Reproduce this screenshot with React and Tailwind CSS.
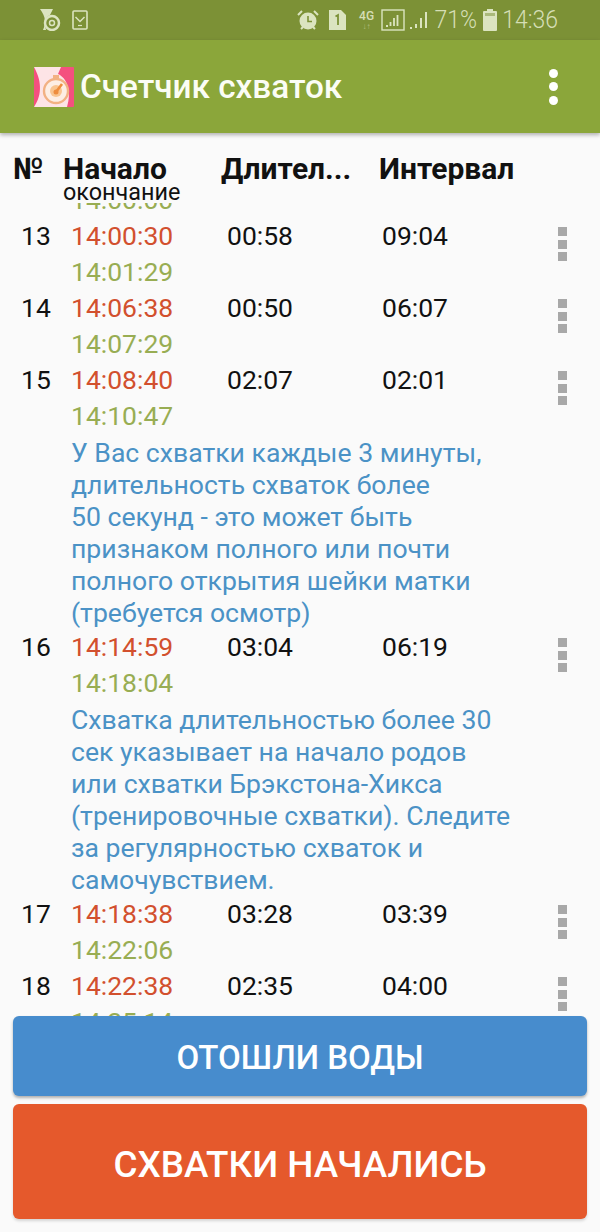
const rows = [
  { n: 13, start: '14:00:30', end: '14:01:29', dur: '00:58', gap: '09:04' },
  { n: 14, start: '14:06:38', end: '14:07:29', dur: '00:50', gap: '06:07' },
  {
    n: 15, start: '14:08:40', end: '14:10:47', dur: '02:07', gap: '02:01',
    note: ['У Вас схватки каждые 3 минуты,', 'длительность схваток более', '50 секунд - это может быть', 'признаком полного или почти', 'полного открытия шейки матки', '(требуется осмотр)'],
  },
  {
    n: 16, start: '14:14:59', end: '14:18:04', dur: '03:04', gap: '06:19',
    note: ['Схватка длительностью более 30', 'сек указывает на начало родов', 'или схватки Брэкстона-Хикса', '(тренировочные схватки). Следите', 'за регулярностью схваток и', 'самочувствием.'],
  },
  { n: 17, start: '14:18:38', end: '14:22:06', dur: '03:28', gap: '03:39' },
  { n: 18, start: '14:22:38', end: '14:25:14', dur: '02:35', gap: '04:00' },
];

function AppLogo() {
  return (
    <svg width="40" height="40" viewBox="0 0 40 40" className="shrink-0">
      <rect width="40" height="40" rx="1" fill="#f4507f" />
      <path d="M0 0H27L24 7C33 11 38 24 33 40H0C7 30 9 16 0 0Z" fill="#fde4e6" />
      <rect x="19" y="8" width="6" height="3" fill="#f2b183" />
      <circle cx="22" cy="24" r="12" fill="#fdeee4" stroke="#f2b183" strokeWidth="2.4" />
      <circle cx="22" cy="24" r="6" fill="#f9c590" />
      <path d="M22 25L28 17" stroke="#ee8d3e" strokeWidth="2.6" />
      <circle cx="22" cy="25" r="2.5" fill="#ee8d3e" />
    </svg>
  );
}

function StatusLeft() {
  return (
    <div className="flex items-center">
      <svg width="21" height="22" viewBox="0 0 21 22" className="ml-[40px]">
        <path d="M0 0H13L10 6C6 8 4 12 5 16L6 21H3C6 14 6 8 0 0Z" fill="#dbe4c0" />
        <circle cx="12" cy="14" r="7" fill="none" stroke="#dbe4c0" strokeWidth="2.5" />
        <circle cx="12" cy="14" r="2.5" fill="none" stroke="#dbe4c0" strokeWidth="1.5" />
      </svg>
      <svg width="16" height="20" viewBox="0 0 16 20" className="ml-[11px]" fill="none" stroke="#dbe4c0">
        <rect x="1" y="1" width="14" height="18" rx="1" strokeWidth="1.6" />
        <path d="M3.5 7L8 11.5L12.5 7" strokeWidth="1.5" />
        <path d="M6 15.5H10" strokeWidth="1.2" />
      </svg>
    </div>
  );
}

function StatusRight() {
  return (
    <div className="flex items-center text-[#d5deb5] text-[23px] font-light">
      <svg width="22" height="22" viewBox="0 0 22 22" fill="none">
        <circle cx="11" cy="12" r="8.5" fill="#dbe4c0" />
        <path d="M11 7V12.5H15" stroke="#7c9136" strokeWidth="1.6" />
        <path d="M1 6L5 2M21 6L17 2M4 20L6 18M18 20L16 18" stroke="#dbe4c0" strokeWidth="2" />
      </svg>
      <svg width="18" height="20" viewBox="0 0 18 20" className="ml-[9px]">
        <path d="M1 0H13L18 5V20H1Z" fill="#dbe4c0" />
        <path d="M7.5 6.5L10 5V15" stroke="#7c9136" strokeWidth="1.8" fill="none" />
      </svg>
      <div className="ml-[13px] flex w-[16px] flex-col items-center leading-none">
        <span className="text-[12px] font-medium leading-[13px]">4G</span>
        <span className="text-[8px] leading-[8px] opacity-60">↓↑</span>
      </div>
      <svg width="24" height="22" viewBox="0 0 24 22" className="ml-[6px]" fill="none">
        <rect x="1" y="1" width="22" height="20" stroke="#dbe4c0" strokeWidth="1.4" />
        <path d="M5 17H7M9.5 17V13M13 17V9M16.5 17V6" stroke="#dbe4c0" strokeWidth="1.8" />
      </svg>
      <svg width="22" height="22" viewBox="0 0 22 22" className="ml-[3px]" fill="none">
        <path d="M2 19H4M8 19V15M13 19V9M18 19V3" stroke="#dbe4c0" strokeWidth="2" />
      </svg>
      <span className="ml-[5px] inline-block scale-y-110">71%</span>
      <svg width="14" height="22" viewBox="0 0 14 22" className="ml-[6px]">
        <rect x="4" y="0" width="6" height="2" fill="#dbe4c0" />
        <rect x="0" y="2" width="14" height="20" rx="1" fill="#dbe4c0" />
        <rect x="2" y="4" width="10" height="3" fill="#a9b97a" />
      </svg>
      <span className="ml-[5px] mr-[42px] inline-block scale-y-110">14:36</span>
    </div>
  );
}

function Row({ row }) {
  return (
    <div>
      <div className="flex h-[72px] text-[26.5px] leading-[36px]">
        <div className="w-[71px] pl-[21px] text-[#111]">{row.n}</div>
        <div className="w-[156px]">
          <div className="text-[#d2502e]">{row.start}</div>
          <div className="text-[#98ad53]">{row.end}</div>
        </div>
        <div className="w-[155px] text-[#111]">{row.dur}</div>
        <div className="w-[176px] text-[#111]">{row.gap}</div>
        <div className="flex flex-col gap-[3.5px] pt-[9px]">
          <span className="size-[9px] bg-[#a8a8a8]" />
          <span className="size-[9px] bg-[#a8a8a8]" />
          <span className="size-[9px] bg-[#a8a8a8]" />
        </div>
      </div>
      {row.note && (
        <div className="whitespace-nowrap pl-[71px] pt-[3px] text-[26.6px] leading-[32px] text-[#4b92c6]">
          {row.note.map((line) => (
            <div key={line}>{line}</div>
          ))}
        </div>
      )}
    </div>
  );
}

export default function App() {
  return (
    <div className="flex h-[1232px] w-[600px] flex-col overflow-hidden bg-[#fafafa] font-['Roboto',sans-serif]">
      {/* Status bar */}
      <div className="flex h-[40px] shrink-0 items-center justify-between bg-[#7c9136]">
        <StatusLeft />
        <StatusRight />
      </div>

      {/* App bar */}
      <div className="relative z-10 flex h-[93px] shrink-0 items-center bg-[#8ba63a] pl-[34px] pr-[42px] shadow-[0_2px_4px_rgba(0,0,0,0.3)]">
        <AppLogo />
        <span className="ml-[6px] text-[33.3px] font-medium text-[#fbfdf5]">Счетчик схваток</span>
        <div className="ml-auto flex flex-col gap-[4.5px]">
          <span className="size-[9px] rounded-full bg-white" />
          <span className="size-[9px] rounded-full bg-white" />
          <span className="size-[9px] rounded-full bg-white" />
        </div>
      </div>

      {/* Table header */}
      <div className="flex h-[70px] shrink-0 pt-[23px] text-[30px] font-bold leading-[26px] text-[#111]">
        <div className="w-[63px] pl-[13px]">№</div>
        <div className="w-[158px]">
          <div>Начало</div>
          <div className="text-[23.4px] font-normal leading-[20px]">окончание</div>
        </div>
        <div className="w-[158px]">Длител...</div>
        <div>Интервал</div>
      </div>

      {/* List, scrolled: the row above 13 only shows the foot of its end time */}
      <div className="flex-1 overflow-hidden">
        <div className="h-[15px] overflow-hidden pl-[71px] text-[26.5px] leading-[36px] text-[#98ad53]">
          <div className="-mt-[21px]">14:00:00</div>
        </div>
        {rows.map((row) => (
          <Row key={row.n} row={row} />
        ))}
      </div>

      {/* Buttons */}
      <div className="flex shrink-0 flex-col gap-[8px] px-[13px] pb-[13px] font-medium text-white">
        <button className="flex h-[80px] items-center justify-center rounded-[6px] bg-[#478ccd] pt-[3px] text-[33px] shadow-[0_2px_3px_rgba(0,0,0,0.3)]">
          ОТОШЛИ ВОДЫ
        </button>
        <button className="flex h-[115px] items-center justify-center rounded-[6px] bg-[#e5592c] pt-[6px] text-[36.8px] shadow-[0_2px_3px_rgba(0,0,0,0.15)]">
          СХВАТКИ НАЧАЛИСЬ
        </button>
      </div>
    </div>
  );
}
